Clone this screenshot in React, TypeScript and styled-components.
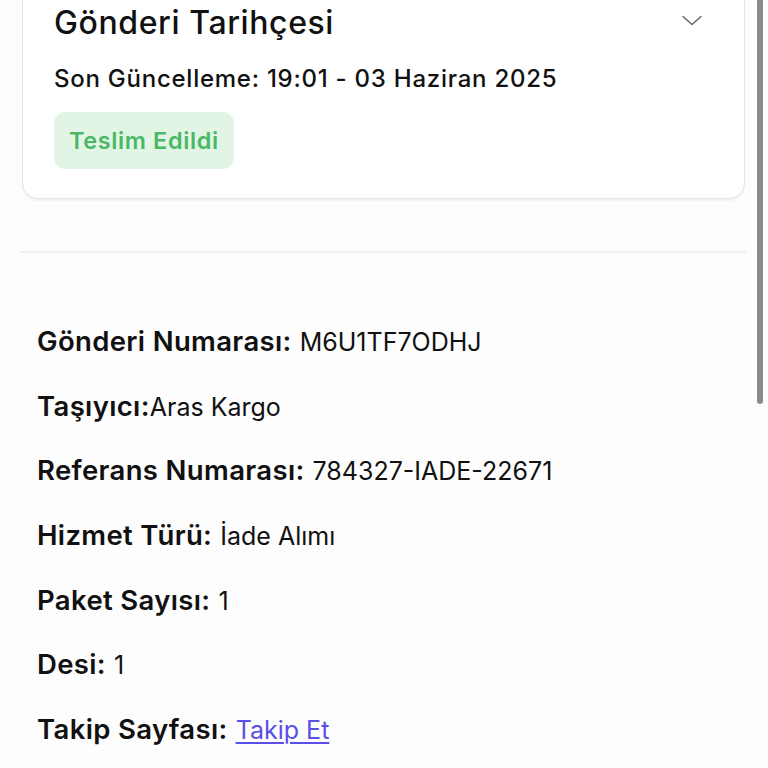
import React from "react";
import styled, { createGlobalStyle } from "styled-components";

const GlobalStyle = createGlobalStyle`
  html {
    overflow: hidden;
  }
  html, body {
    margin: 0;
    padding: 0;
    background: #fdfdfd;
  }
  body {
    font-family: Inter, "Noto Sans", "Liberation Sans", sans-serif;
    color: #111;
  }
`;

const Page = styled.div`
  width: 768px;
  box-sizing: border-box;
  padding: 0 22px 40px 20px;
`;

const Card = styled.section`
  margin: -24px 1px 0 2px;
  padding: 26px 30px 29px 31px;
  border: 1.5px solid #e6e6e6;
  border-radius: 16px;
  background: #fff;
  box-shadow: 0 2px 2px rgba(0, 0, 0, 0.05);
`;

const CardHeader = styled.div`
  display: flex;
  align-items: center;
  justify-content: space-between;
`;

const Title = styled.h2`
  margin: 0;
  font-size: 32px;
  font-weight: 500;
  line-height: 40px;
  letter-spacing: 0.6px;
`;

const Chevron = styled.svg`
  width: 24px;
  height: 24px;
  margin-right: 10px;
  margin-top: -4px;
  color: #6b6b6b;
`;

const Updated = styled.p`
  margin: 20px 0 0;
  font-size: 24px;
  font-weight: 500;
  line-height: 32px;
  letter-spacing: 0.75px;
`;

const Badge = styled.span`
  display: inline-block;
  margin-top: 17px;
  padding: 12px 15px;
  border-radius: 11px;
  background: #e2f5e5;
  color: #4bb865;
  font-size: 23.5px;
  font-weight: 600;
  line-height: 33px;
  letter-spacing: 0.6px;
`;

const Divider = styled.hr`
  margin: 52px 0 0;
  border: 0;
  border-top: 2px solid #efefef;
`;

const Details = styled.dl`
  margin: 70px 0 0 17px;
  display: grid;
  row-gap: 28.7px;
`;

const Row = styled.div`
  display: flex;
  align-items: baseline;
  height: 36px;
  line-height: 36px;
`;

const Label = styled.dt<{ $tight?: boolean }>`
  font-size: 27.5px;
  font-weight: 600;
  letter-spacing: 0.35px;
  margin-right: ${(p) => (p.$tight ? "0" : "8px")};
`;

const Value = styled.dd`
  margin: 0;
  font-size: 25px;
  font-weight: 400;
`;

const TrackLink = styled.a`
  color: #5a4fe6;
  text-decoration: underline;
  text-underline-offset: 3px;
  text-decoration-thickness: 1.5px;
`;

const ScrollThumb = styled.div`
  position: fixed;
  top: 0;
  right: 5px;
  width: 6px;
  height: 404px;
  border-radius: 0 0 3px 3px;
  background: #8a8a8a;
`;

const details: { label: string; value: string; tight?: boolean }[] = [
  { label: "Gönderi Numarası:", value: "M6U1TF7ODHJ" },
  { label: "Taşıyıcı:", value: "Aras Kargo", tight: true },
  { label: "Referans Numarası:", value: "784327-IADE-22671" },
  { label: "Hizmet Türü:", value: "İade Alımı" },
  { label: "Paket Sayısı:", value: "1" },
  { label: "Desi:", value: "1" },
];

export default function App() {
  return (
    <>
      <GlobalStyle />
      <Page>
        <Card>
          <CardHeader>
            <Title>Gönderi Tarihçesi</Title>
            <Chevron viewBox="0 0 24 24" fill="none" stroke="currentColor" strokeWidth="1.6" strokeLinecap="round" strokeLinejoin="round">
              <path d="m3 7.5 9 8 9-8" />
            </Chevron>
          </CardHeader>
          <Updated>Son Güncelleme: 19:01 - 03 Haziran 2025</Updated>
          <Badge>Teslim Edildi</Badge>
        </Card>
        <Divider />
        <Details>
          {details.map((d) => (
            <Row key={d.label}>
              <Label $tight={d.tight}>{d.label}</Label>
              <Value>{d.value}</Value>
            </Row>
          ))}
          <Row>
            <Label>Takip Sayfası:</Label>
            <Value>
              <TrackLink href="#">Takip Et</TrackLink>
            </Value>
          </Row>
        </Details>
      </Page>
      <ScrollThumb />
    </>
  );
}
